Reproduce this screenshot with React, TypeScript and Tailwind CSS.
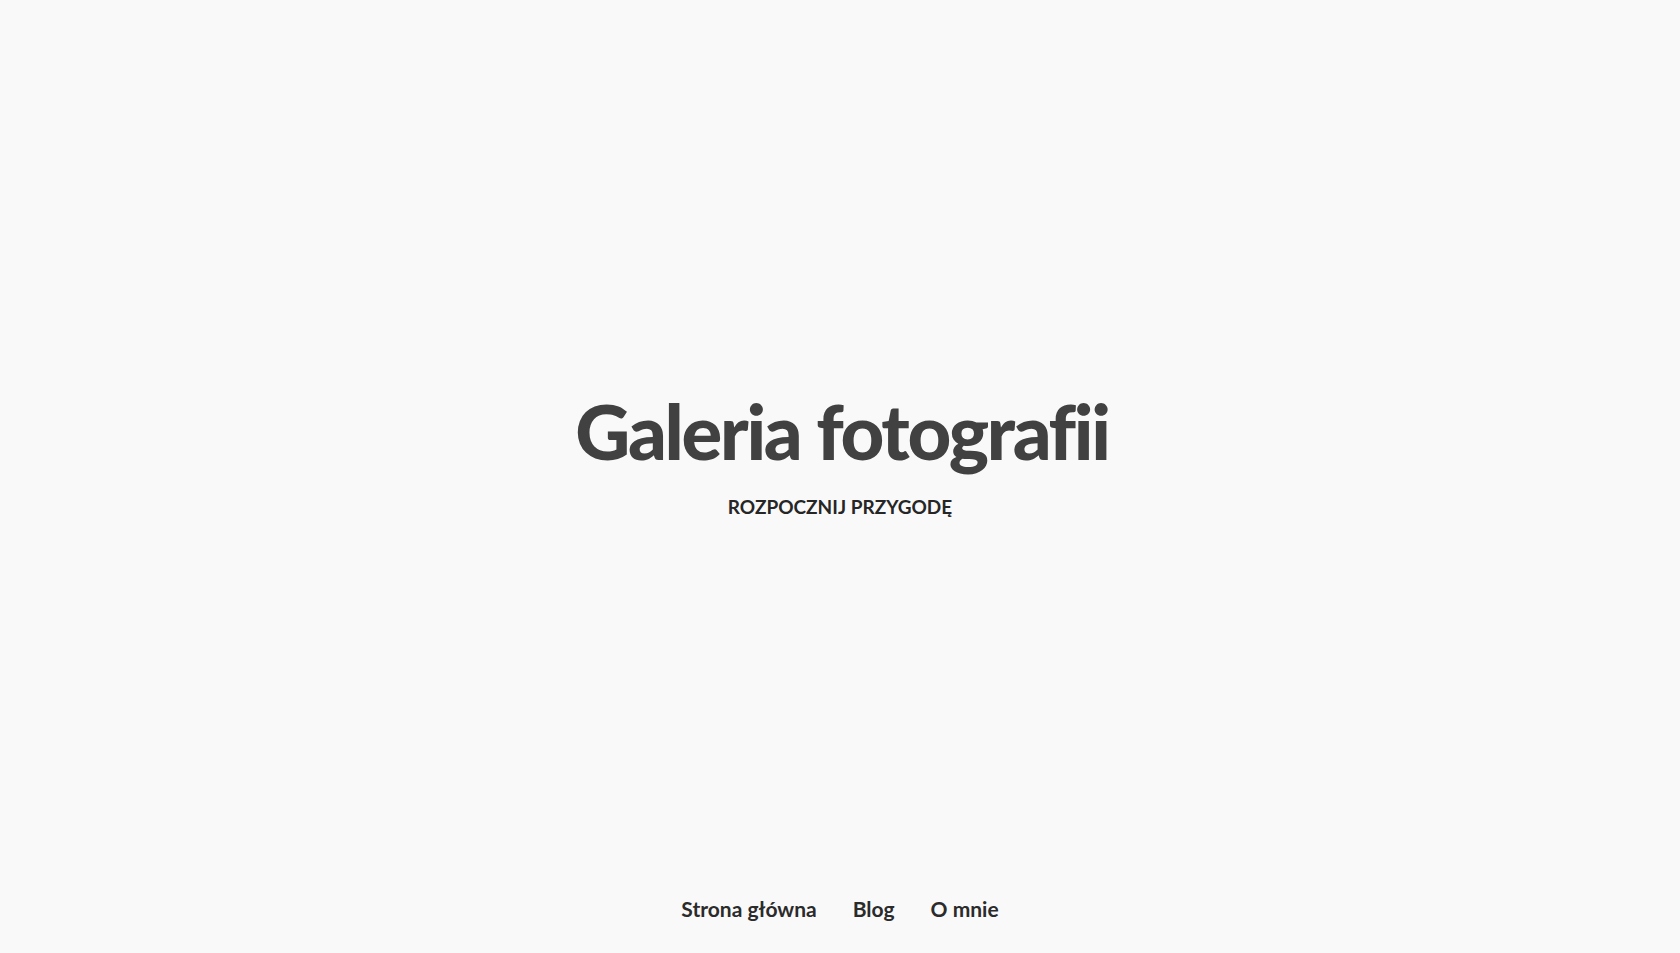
export default function App() {
  const links = ["Strona główna", "Blog", "O mnie"]

  return (
    <div className="flex min-h-screen flex-col bg-[#f9f9f9] font-['Lato',sans-serif]">
      {/* Hero */}
      <main className="flex flex-1 flex-col items-center pt-[393px]">
        <h1 className="pl-[4px] text-[76px] font-black leading-[1] tracking-[-2.3px] text-[#414141]">Galeria fotografii</h1>
        <p className="mt-[28px] text-[19px] font-bold leading-none text-[#262626]">ROZPOCZNIJ PRZYGODĘ</p>
      </main>

      {/* Footer nav */}
      <nav className="flex h-[83px] items-center justify-center gap-[36px] pb-[6px]">
        {links.map((l) => (
          <a key={l} href="#" className="text-[21px] font-bold text-[#2b2b2b]">
            {l}
          </a>
        ))}
      </nav>
    </div>
  )
}
